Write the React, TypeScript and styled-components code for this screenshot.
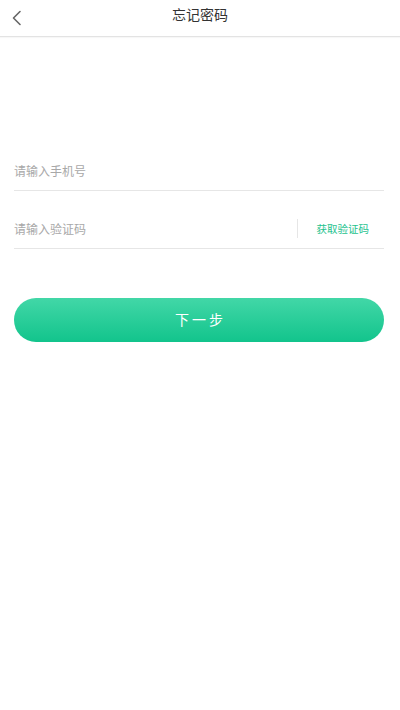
import styled, { createGlobalStyle } from "styled-components";

const GlobalStyle = createGlobalStyle`
    body {
        margin: 0;
        background: #ffffff;
        font-family: "Noto Sans CJK SC", "Noto Sans", sans-serif;
    }
`;

export default function App() {
    return (
        <PageStl>
            <GlobalStyle />
            <HeaderStl>
                <BackStl aria-label="返回">
                    <svg width="10" height="16" viewBox="0 0 10 16">
                        <polyline points="8,1.5 1.5,8 8,14.5" fill="none" stroke="#666" strokeWidth="1.6" strokeLinecap="round" strokeLinejoin="round" />
                    </svg>
                </BackStl>
                <TituloStl>忘记密码</TituloStl>
            </HeaderStl>
            <FormStl>
                <LinhaStl>
                    <CampoStl placeholder="请输入手机号" />
                </LinhaStl>
                <LinhaStl>
                    <CampoStl placeholder="请输入验证码" />
                    <CodigoStl>获取验证码</CodigoStl>
                </LinhaStl>
                <BotaoStl>下一步</BotaoStl>
            </FormStl>
        </PageStl>
    );
}

const PageStl = styled.div`
    width: 400px;
    min-height: 710px;
    background: #ffffff;
`;

const HeaderStl = styled.div`
    position: relative;
    height: 36px;
    display: flex;
    align-items: center;
    justify-content: center;
    border-bottom: 1px solid #e3e3e3;
    box-shadow: 0 1px 1px rgba(0, 0, 0, 0.03);
`;

const BackStl = styled.button`
    position: absolute;
    left: 7px;
    top: 8px;
    width: 20px;
    height: 20px;
    padding: 0;
    border: none;
    background: none;
    display: flex;
    align-items: center;
    justify-content: center;
`;

const TituloStl = styled.span`
    font-size: 14px;
    color: #333333;
    margin-top: -8px;
`;

const FormStl = styled.div`
    display: flex;
    flex-direction: column;
    margin: 114px 16px 0 14px;
`;

const LinhaStl = styled.div`
    display: flex;
    align-items: center;
    height: 39px;
    border-bottom: 1px solid #e6e6e6;
    & + & {
        margin-top: 18px;
    }
`;

const CampoStl = styled.input`
    flex: 1;
    min-width: 0;
    border: none;
    outline: none;
    padding: 0;
    font-family: inherit;
    font-size: 12px;
    color: #333;
    background: transparent;
    &::placeholder {
        color: #a8a8a8;
    }
`;

const CodigoStl = styled.span`
    font-size: 10.5px;
    color: #1ec28e;
    border-left: 1px solid #e6e6e6;
    height: 19px;
    line-height: 19px;
    padding: 0 15px 0 19px;
`;

const BotaoStl = styled.button`
    margin-top: 49px;
    height: 44px;
    border: none;
    border-radius: 22px;
    background: linear-gradient(180deg, #42d7a7 0%, #12c48c 100%);
    color: #ffffff;
    font-family: inherit;
    font-size: 14px;
    letter-spacing: 3px;
    padding: 0 0 2px 3px;
`;
